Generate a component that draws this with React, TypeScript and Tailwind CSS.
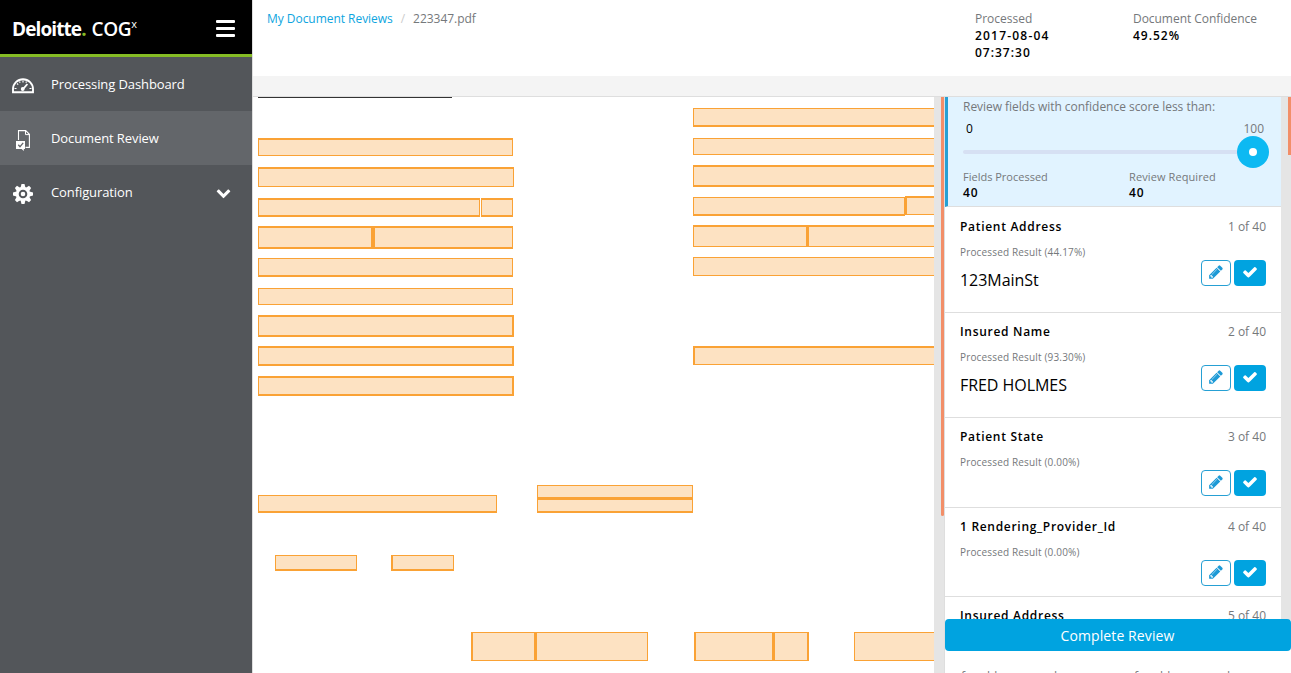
type Box = [x1: number, y1: number, x2: number, y2: number, t: number, r: number, b: number, l: number];

const boxes: Box[] = [
  [5, 41, 260, 59, 2, 1, 1, 1],
  [5, 70, 261, 90, 2, 1, 1, 1],
  [5, 101, 227, 120, 2, 1, 2, 1],
  [228, 101, 260, 120, 2, 1, 2, 1],
  [5, 129, 120, 152, 2, 2, 2, 1],
  [120, 129, 260, 152, 2, 1, 2, 2],
  [5, 161, 260, 180, 1, 1, 2, 1],
  [5, 191, 260, 208, 1, 1, 1, 1],
  [5, 218, 261, 240, 2, 2, 2, 1],
  [5, 249, 261, 269, 2, 2, 2, 1],
  [5, 279, 261, 299, 2, 2, 2, 1],
  [440, 11, 700, 30, 1, 1, 2, 1],
  [440, 41, 700, 58, 1, 1, 1, 1],
  [440, 68, 700, 90, 2, 1, 2, 1],
  [440, 100, 652, 119, 1, 1, 2, 1],
  [652, 99, 700, 118, 2, 1, 1, 2],
  [440, 128, 554, 150, 2, 1, 1, 1],
  [554, 128, 700, 150, 2, 1, 1, 2],
  [440, 160, 700, 179, 1, 1, 1, 1],
  [440, 249, 700, 268, 2, 1, 1, 2],
  [5, 398, 244, 416, 1, 1, 2, 1],
  [284, 388, 440, 402, 1, 1, 2, 1],
  [284, 402, 440, 416, 1, 1, 2, 1],
  [22, 458, 104, 474, 1, 1, 2, 1],
  [138, 458, 201, 474, 1, 1, 2, 2],
  [218, 535, 282, 564, 1, 1, 1, 2],
  [282, 535, 395, 564, 1, 1, 1, 2],
  [441, 535, 520, 564, 1, 1, 1, 2],
  [520, 535, 556, 564, 1, 2, 1, 2],
  [601, 535, 700, 564, 1, 1, 1, 1],
];

type Field = { name: string; score?: string; value?: string; size: string };

const fields: Field[] = [
  { name: "Patient Address", score: "44.17%", value: "123MainSt", size: "h-[106px] pt-3" },
  { name: "Insured Name", score: "93.30%", value: "FRED HOLMES", size: "h-[105px] pt-[11px]" },
  { name: "Patient State", score: "0.00%", size: "h-[90px] pt-[11px]" },
  { name: "1 Rendering_Provider_Id", score: "0.00%", size: "h-[89px] pt-[11px]" },
  { name: "Insured Address", size: "h-[90px] pt-[11px]" },
];

const CHECK =
  "M1671 566q0 40-28 68l-724 724-136 136q-28 28-68 28t-68-28l-136-136-362-362q-28-28-28-68t28-68l136-136q28-28 68-28t68 28l294 295 656-657q28-28 68-28t68 28l136 136q28 28 28 68z";
const PENCIL =
  "M491 1536l91-91-235-235-91 91v107h128v128h107zm523-928q0-22-22-22-10 0-17 7l-542 542q-7 7-7 17 0 22 22 22 10 0 17-7l542-542q7-7 7-17zm-54-192l416 416-832 832h-416v-416zm683 96q0 53-37 90l-166 166-416-416 166-165q36-38 90-38 53 0 91 38l235 234q37 39 37 91z";
const CHEVRON =
  "M1683 808l-742 741q-19 19-45 19t-45-19l-742-741q-19-19-19-45.5t19-45.5l166-165q19-19 45-19t45 19l531 531 531-531q19-19 45-19t45 19l166 165q19 19 19 45.5t-19 45.5z";

function Glyph({ d, className }: { d: string; className: string }) {
  return (
    <svg viewBox="0 0 1792 1792" fill="currentColor" className={className}>
      <path d={d} />
    </svg>
  );
}

function GaugeIcon() {
  return (
    <svg viewBox="0 0 22 16" className="h-4 w-[22px]" fill="none" stroke="#fff">
      <path d="M1 14.300V11a10 9.800 0 0 1 20 0v3.300z" strokeWidth="1.9" />
      <path d="M11 2.500v2M5 5.500l1.200 1.100M2.500 10.500h2M17.500 10.500h2M7.500 3.500l.6 1.200M14.500 3.500l-.6 1.200" strokeWidth="1.200" />
      <path d="M11 11.200L15.400 6" strokeWidth="1.800" />
      <circle cx="10.700" cy="11" r="1.900" fill="#fff" stroke="none" />
    </svg>
  );
}

function DocIcon() {
  return (
    <svg viewBox="0 0 14 21" className="h-[21px] w-[14px]" fill="none" stroke="#fff">
      <path d="M2.500 10V.6h7.200L13.400 4.300V17.400H9.500" strokeWidth="1.100" />
      <path d="M9.500.6v4h4" strokeWidth="1" />
      <path d="M0 11h9v8H7.800v2L5.600 19H0z" fill="#fff" stroke="none" />
      <path d="M2.300 14.800l1.700 1.900 3.200-3.800" stroke="#63666a" strokeWidth="1.300" />
    </svg>
  );
}

function GearIcon() {
  return (
    <svg viewBox="0 0 20 20" className="size-5" fill="#fff">
      {[0, 45, 90, 135].map((a) => (
        <path key={a} d="M8.500 0h3l.9 3.500v13L11.500 20h-3l-.9-3.500v-13z" transform={`rotate(${a} 10 10)`} />
      ))}
      <circle cx="10" cy="10" r="7.200" />
      <circle cx="10" cy="10" r="3.300" fill="none" stroke="#53565a" strokeWidth="2" />
    </svg>
  );
}

function Sidebar() {
  return (
    <aside className="flex w-[252px] shrink-0 flex-col bg-[#53565a] text-white">
      <div className="flex h-[57px] items-center justify-between border-b-[3px] border-[#86bc25] bg-black pr-[17px] pl-3">
        <div className="flex items-start pt-1 text-[19px] leading-6 whitespace-nowrap">
          <span className="font-bold tracking-[-0.9px]">Deloitte</span>
          <span className="mr-[5px] font-bold text-[#86bc25]">.</span>
          <span className="font-semibold tracking-[-0.4px]">COG</span>
          <span className="-mt-[5px] text-[11px]">x</span>
        </div>
        <div className="flex w-[19px] flex-col gap-1 pt-[2px]">
          <i className="h-[3px] rounded-[1px] bg-white" />
          <i className="h-[3px] rounded-[1px] bg-white" />
          <i className="h-[3px] rounded-[1px] bg-white" />
        </div>
      </div>
      <nav className="text-[13px] tracking-[-0.1px]">
        <a className="flex h-[54px] items-center">
          <span className="flex w-[51px] pl-3 pt-[3px]"><GaugeIcon /></span>
          <span className="pt-[2px]">Processing Dashboard</span>
        </a>
        <a className="flex h-[54px] items-center bg-[#63666a]">
          <span className="flex w-[51px] pl-4 pt-1"><DocIcon /></span>
          <span className="pt-[2px]">Document Review</span>
        </a>
        <a className="flex h-[54px] items-center">
          <span className="flex w-[51px] pl-[13px] pt-1"><GearIcon /></span>
          <span className="pt-[2px]">Configuration</span>
          <Glyph d={CHEVRON} className="mr-[21px] ml-auto size-[15px]" />
        </a>
      </nav>
    </aside>
  );
}

function Header() {
  return (
    <header className="flex h-[76px] shrink-0 pt-[10px] pl-[14px] text-[12px] leading-[17px] text-[#75787b]">
      <div className="w-[708px] tracking-[-0.04px]">
        <span className="text-[#0da5e0]">My Document Reviews</span>
        <span className="px-2 text-[#ccc]">/</span>
        <span>223347.pdf</span>
      </div>
      <div className="w-[158px]">
        Processed
        <div className="w-[100px] font-semibold tracking-[1.1px] text-black">
          <span className="tracking-[1.200px]">2017-08-04</span> <span className="tracking-[1px]">07:37:30</span>
        </div>
      </div>
      <div>
        <span className="tracking-[-0.04px]">Document Confidence</span>
        <div className="font-semibold tracking-[1px] text-black">49.52%</div>
      </div>
    </header>
  );
}

function DocumentCanvas() {
  return (
    <div className="relative w-[681px] shrink-0 overflow-hidden bg-white">
      <div className="ml-[5px] h-px w-[194px] bg-[#333]" />
      {boxes.map(([x1, y1, x2, y2, t, r, b, l], i) => (
        <div
          key={i}
          className="absolute border-[#faa235] bg-[#fde2c2]"
          style={{ left: x1, top: y1, width: x2 - x1, height: y2 - y1, borderWidth: `${t}px ${r}px ${b}px ${l}px` }}
        />
      ))}
    </div>
  );
}

function ConfidenceFilter() {
  return (
    <section className="h-[110px] shrink-0 border-b border-l-[3px] border-b-[#dedede] border-l-[#26a0d4] bg-[#e1f3ff] pr-[13px] pl-[15px] text-[12px] leading-4 text-[#75787b]">
      <div className="pt-[2px] tracking-[-0.03px]">Review fields with confidence score less than:</div>
      <div className="mt-[6px] flex justify-between pr-1 pl-[3px]">
        <span className="text-black">0</span>
        <span>100</span>
      </div>
      <div className="-mt-px mr-[-1px] flex h-8 items-center">
        <div className="h-1 flex-1 rounded-l-full bg-[#d6e0f3]" />
        <div className="flex size-8 items-center justify-center rounded-full bg-[#0db9f2]">
          <div className="size-2 rounded-full bg-white" />
        </div>
      </div>
      <div className="mt-[1px] flex text-[11px]">
        <div className="w-[166px]">
          Fields Processed
          <div className="text-[12px] font-semibold tracking-[1px] text-black">40</div>
        </div>
        <div>
          <span className="tracking-[0.1px]">Review Required</span>
          <div className="text-[12px] font-semibold tracking-[1px] text-black">40</div>
        </div>
      </div>
    </section>
  );
}

function FieldCard({ field, index }: { field: Field; index: number }) {
  return (
    <article className={`${field.size} flex shrink-0 flex-col border-b border-[#dedede] px-[15px]`}>
      <div className="flex justify-between text-[12px] leading-4">
        <h3 className="font-semibold tracking-[0.7px] text-black">{field.name}</h3>
        <span className="text-[#75787b]">{index + 1} of 40</span>
      </div>
      {field.score && (
        <>
          <div className="mt-[10px] text-[10px] leading-[14px] tracking-[0.16px] text-[#75787b]">
            Processed Result ({field.score})
          </div>
          <div className="flex justify-between">
            <div className="mt-[9px] text-[16px] leading-6 tracking-[-0.05px] text-black">{field.value}</div>
            <div className="mt-[1px] flex gap-[3px]">
              <button className="flex h-[26px] w-[30px] items-center justify-center rounded border border-[#26a0d4] bg-white text-[#1d9ad6]">
                <Glyph d={PENCIL} className="mb-[2px] size-4" />
              </button>
              <button className="flex h-[26px] w-8 items-center justify-center rounded bg-[#00a3e0] text-white">
                <Glyph d={CHECK} className="mb-[2px] size-4" />
              </button>
            </div>
          </div>
        </>
      )}
    </article>
  );
}

function ReviewPanel() {
  return (
    <div className="flex min-w-0 flex-1 flex-col overflow-hidden border-l border-[#dedede]">
      <div className="flex h-[523px] shrink-0 bg-[#e5e5e5]">
        <div className="flex w-[336px] flex-col overflow-hidden bg-white">
          <ConfidenceFilter />
          {fields.map((f, i) => (
            <FieldCard key={f.name} field={f} index={i} />
          ))}
        </div>
        <div className="ml-[7px] h-[58px] w-[3px] bg-[#f28e68]" />
      </div>
      <button className="-mt-px h-8 shrink-0 rounded bg-[#00a3e0] pr-px text-[14px] tracking-[0.1px] text-white">
        Complete Review
      </button>
      <div className="flex shrink-0 pt-[18px] pl-[16px] text-[12px] leading-4 whitespace-nowrap text-[#75787b]">
        <span className="w-[173px]">for able resumed</span>
        <span>for able resumed</span>
      </div>
    </div>
  );
}

export default function App() {
  return (
    <div className="flex h-[673px] w-[1291px] overflow-hidden bg-white font-['Open_Sans',sans-serif]">
      <Sidebar />
      <main className="flex min-w-0 flex-1 flex-col border-l border-[#dedede]">
        <Header />
        <div className="h-[21px] shrink-0 border-b border-[#dedede] bg-[#f4f4f4]" />
        <div className="flex min-h-0 flex-1">
          <DocumentCanvas />
          <div className="flex w-[10px] shrink-0 justify-end bg-[#e5e5e5]">
            <div className="h-[419px] w-[3px] rounded-b-sm bg-[#f28e68]" />
          </div>
          <ReviewPanel />
        </div>
      </main>
    </div>
  );
}
